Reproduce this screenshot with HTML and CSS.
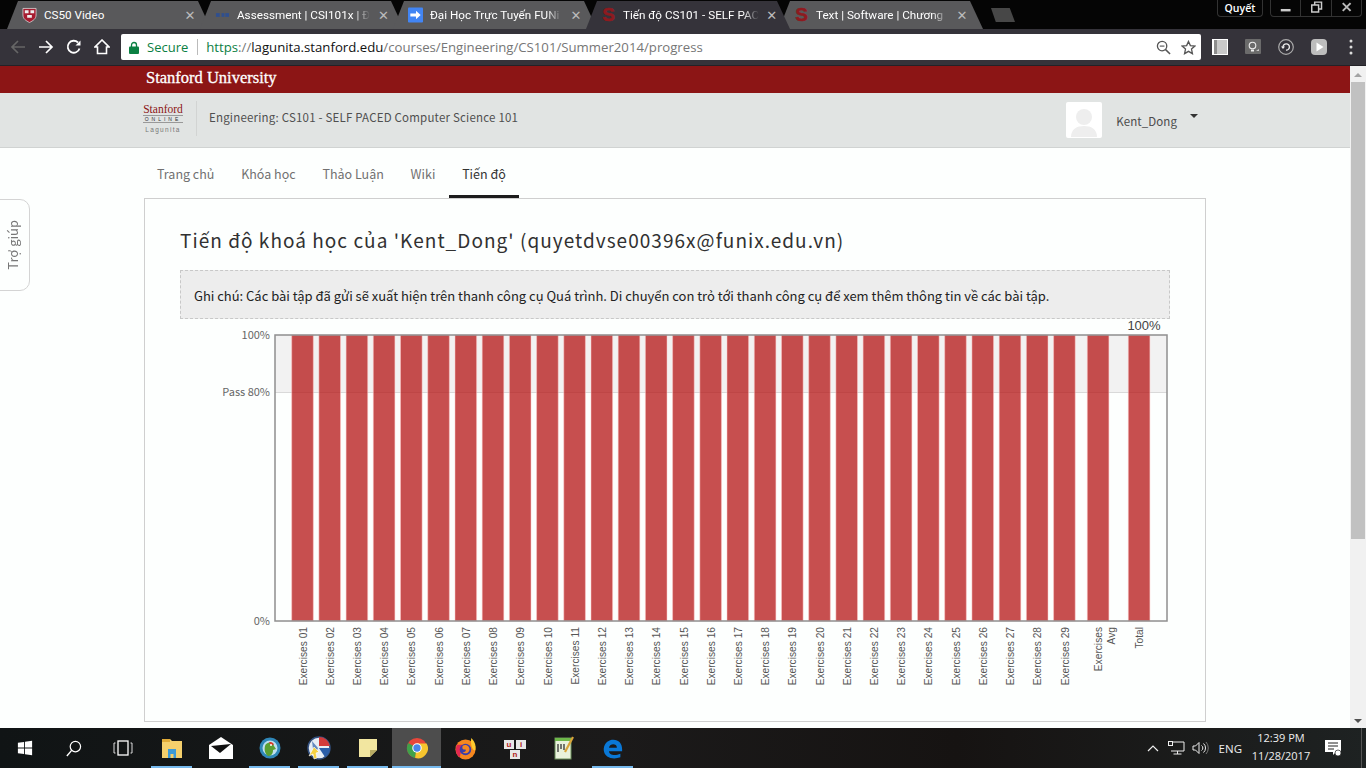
FILE: index.html
```html
<!DOCTYPE html>
<html lang="vi">
<head>
  <meta charset="UTF-8" />
  <title>Tiến độ CS101 - SELF PACED</title>
  <link rel="stylesheet" href="styles.css">
</head>
<body>
  <div class="tabstrip">
    <div class="tab">
      <svg class="favicon" viewBox="0 0 16 16"><path d="M1 1h14v7c0 4-3 6-7 8-4-2-7-4-7-8z" fill="#a51c30" stroke="#ddd" stroke-width=".8"/><path d="M3 3h4v3H3zM9 3h4v3H9zM5.500 8h5v3h-5z" fill="#eee"/></svg>
      <span class="tab-title">CS50 Video</span><span class="tab-close">✕</span>
    </div>
    <div class="tab">
      <svg class="favicon" viewBox="0 0 16 16"><rect x="1" y="6" width="14" height="4" fill="#2f4f8f"/><rect x="5" y="6" width="2" height="4" fill="#59595b"/><rect x="10" y="6" width="1" height="4" fill="#59595b"/></svg>
      <span class="tab-title tab-fade">Assessment | CSI101x | Đ</span><span class="tab-close">✕</span>
    </div>
    <div class="tab">
      <svg class="favicon" viewBox="0 0 16 16"><rect width="16" height="16" rx="1" fill="#4285f4"/><path d="M2.500 6.500h6V3.500L13.500 8l-5 4.500V9.500h-6z" fill="#fff"/></svg>
      <span class="tab-title tab-fade">Đại Học Trực Tuyến FUNi</span><span class="tab-close">✕</span>
    </div>
    <div class="tab tab-active">
      <span class="favicon favicon-s">S</span>
      <span class="tab-title tab-fade">Tiến độ CS101 - SELF PAC</span><span class="tab-close">✕</span>
    </div>
    <div class="tab">
      <span class="favicon favicon-s">S</span>
      <span class="tab-title tab-fade">Text | Software | Chương</span><span class="tab-close">✕</span>
    </div>
    <div class="newtab"></div>
    <div class="window-area">
      <span class="profile">Quyết</span>
      <div class="window-controls">
        <svg viewBox="0 0 30 16"><rect x="10" y="9" width="10" height="2.500" fill="#ccc"/></svg>
        <svg viewBox="0 0 30 16"><path d="M11 5h7v7h-7zM14 5V2h7v7h-3" fill="none" stroke="#ccc" stroke-width="1.500"/></svg>
        <svg viewBox="0 0 30 16"><path d="M11 3l8 8M19 3l-8 8" stroke="#bbb" stroke-width="2"/></svg>
      </div>
    </div>
  </div>

  <div class="toolbar">
    <svg class="tool" viewBox="0 0 16 16"><path d="M15 8H2M8 2L2 8l6 6" fill="none" stroke="#666" stroke-width="1.700"/></svg>
    <svg class="tool" viewBox="0 0 16 16"><path d="M1 8h13M8 2l6 6-6 6" fill="none" stroke="#fff" stroke-width="1.700"/></svg>
    <svg class="tool" viewBox="0 0 16 16"><path d="M13.500 9.500A6 6 0 1 1 12 3.500" fill="none" stroke="#fff" stroke-width="1.800"/><path d="M9.500 6.500h5v-5z" fill="#fff"/></svg>
    <svg class="tool" viewBox="0 0 16 16"><path d="M8 1L1 8h2.500v6.500h9V8H15z" fill="none" stroke="#fff" stroke-width="1.600"/></svg>
    <div class="omnibox">
      <svg class="lock" viewBox="0 0 10 13"><path d="M2.500 6V4a2.500 2.500 0 0 1 5 0v2" fill="none" stroke="#0b8043" stroke-width="1.300"/><rect y="5.500" width="10" height="7.500" rx="1" fill="#0b8043"/></svg>
      <span class="secure">Secure</span>
      <span class="omni-sep"></span>
      <span class="url"><span class="url-https">https</span>://<span class="url-host">lagunita.stanford.edu</span>/courses/Engineering/CS101/Summer2014/progress</span>
      <svg class="omni-icon" viewBox="0 0 16 16"><circle cx="6.500" cy="6.500" r="5" fill="none" stroke="#555" stroke-width="1.400"/><path d="M10 10l5 5" stroke="#555" stroke-width="1.600"/><path d="M4 6.500h5" stroke="#555" stroke-width="1.200"/></svg>
      <svg class="omni-icon" viewBox="0 0 16 16"><path d="M8 1.500l2 4.500 4.800.5-3.600 3.200 1 4.800L8 12.100l-4.200 2.400 1-4.800L1.200 6.500 6 6z" fill="none" stroke="#555" stroke-width="1.400"/></svg>
    </div>
    <div class="extensions">
      <svg viewBox="0 0 16 16"><rect width="16" height="16" fill="#fff"/><rect x="2" y="1" width="13" height="14" fill="#c9c9c9"/><rect x="2" y="1" width="3" height="14" fill="#8d8d8d"/></svg>
      <svg viewBox="0 0 16 16"><rect width="16" height="15" rx="1" fill="#6b6b6b"/><circle cx="7.500" cy="6.500" r="3.300" fill="none" stroke="#eee" stroke-width="1.100"/><path d="M6 10.500h3v2H6z" fill="#eee"/><path d="M11 12l3-2v2z" fill="#ccc"/></svg>
      <svg viewBox="0 0 16 16"><circle cx="8" cy="8" r="7.300" fill="none" stroke="#aaa" stroke-width="1.200"/><path d="M5 8a3.200 3.200 0 1 1 3 3.200" fill="none" stroke="#eee" stroke-width="1.300"/><path d="M3 7.500h4l-2 2.500z" fill="#eee"/></svg>
      <svg viewBox="0 0 16 16"><rect width="16" height="16" rx="4" fill="#bdbdbd"/><path d="M5.500 3.500l7 4.500-7 4.500z" fill="#fff"/></svg>
      <svg class="kebab" viewBox="0 0 4 16"><circle cx="2" cy="2" r="1.500" fill="#ddd"/><circle cx="2" cy="8" r="1.500" fill="#ddd"/><circle cx="2" cy="14" r="1.500" fill="#ddd"/></svg>
    </div>
  </div>

  <div class="viewport">
    <div class="page">
      <div class="brandbar"><span class="brandbar-name">Stanford University</span></div>

      <header class="course-header">
        <div class="logo">
          <span class="logo-stanford">Stanford</span>
          <span class="logo-online">ONLINE</span>
          <span class="logo-lagunita">Lagunita</span>
        </div>
        <span class="course-title">Engineering: CS101 - SELF PACED Computer Science 101</span>
        <div class="user">
          <span class="avatar">
            <svg viewBox="0 0 36 36"><circle cx="18" cy="15" r="8" fill="#eee"/><path d="M5 35c0-8 6-11 13-11s13 3 13 11z" fill="#eee"/></svg>
          </span>
          <span class="username">Kent_Dong</span>
          <span class="caret"></span>
        </div>
      </header>

      <nav class="course-nav">
        <a class="nav-item">Trang chủ</a>
        <a class="nav-item">Khóa học</a>
        <a class="nav-item">Thảo Luận</a>
        <a class="nav-item">Wiki</a>
        <a class="nav-item nav-active">Tiến độ</a>
      </nav>

      <section class="card">
        <h1 class="progress-title">Tiến độ khoá học của 'Kent_Dong' (quyetdvse00396x@funix.edu.vn)</h1>
        <p class="note">Ghi chú: Các bài tập đã gửi sẽ xuất hiện trên thanh công cụ Quá trình. Di chuyển con trỏ tới thanh công cụ để xem thêm thông tin về các bài tập.</p>
        <svg class="chart" viewBox="180 319 990 390" width="990" height="390">
          <rect x="275" y="335" width="892" height="57" fill="#f2f2f2"/>
          <path d="M275 392.500h892" stroke="#d9d9d9"/>
          <g class="bars">
            <rect x="291.700" y="335" width="21.600" height="286"/>
            <rect x="318.900" y="335" width="21.600" height="286"/>
            <rect x="346.100" y="335" width="21.600" height="286"/>
            <rect x="373.300" y="335" width="21.600" height="286"/>
            <rect x="400.500" y="335" width="21.600" height="286"/>
            <rect x="427.750" y="335" width="21.600" height="286"/>
            <rect x="455" y="335" width="21.600" height="286"/>
            <rect x="482.200" y="335" width="21.600" height="286"/>
            <rect x="509.400" y="335" width="21.600" height="286"/>
            <rect x="536.600" y="335" width="21.600" height="286"/>
            <rect x="563.800" y="335" width="21.600" height="286"/>
            <rect x="591" y="335" width="21.600" height="286"/>
            <rect x="618.200" y="335" width="21.600" height="286"/>
            <rect x="645.400" y="335" width="21.600" height="286"/>
            <rect x="672.600" y="335" width="21.600" height="286"/>
            <rect x="699.850" y="335" width="21.600" height="286"/>
            <rect x="727" y="335" width="21.600" height="286"/>
            <rect x="754.300" y="335" width="21.600" height="286"/>
            <rect x="781.500" y="335" width="21.600" height="286"/>
            <rect x="808.700" y="335" width="21.600" height="286"/>
            <rect x="835.900" y="335" width="21.600" height="286"/>
            <rect x="863.100" y="335" width="21.600" height="286"/>
            <rect x="890.300" y="335" width="21.600" height="286"/>
            <rect x="917.500" y="335" width="21.600" height="286"/>
            <rect x="944.700" y="335" width="21.600" height="286"/>
            <rect x="971.950" y="335" width="21.600" height="286"/>
            <rect x="999.200" y="335" width="21.600" height="286"/>
            <rect x="1026.400" y="335" width="21.600" height="286"/>
            <rect x="1053.600" y="335" width="21.600" height="286"/>
            <rect x="1087.300" y="335" width="21.600" height="286"/>
            <rect x="1128.300" y="335" width="21.600" height="286"/>
          </g>
          <rect class="frame" x="275" y="335" width="892" height="286"/>
          <text class="ylabel" x="270" y="339">100%</text>
          <text class="ylabel" x="270" y="396">Pass 80%</text>
          <text class="ylabel" x="270" y="625">0%</text>
          <text class="toplabel" x="1144" y="330">100%</text>
          <g class="xlabels">
            <text transform="translate(306.600 627) rotate(-90)">Exercises 01</text>
            <text transform="translate(333.800 627) rotate(-90)">Exercises 02</text>
            <text transform="translate(361 627) rotate(-90)">Exercises 03</text>
            <text transform="translate(388.200 627) rotate(-90)">Exercises 04</text>
            <text transform="translate(415.400 627) rotate(-90)">Exercises 05</text>
            <text transform="translate(442.650 627) rotate(-90)">Exercises 06</text>
            <text transform="translate(469.900 627) rotate(-90)">Exercises 07</text>
            <text transform="translate(497.100 627) rotate(-90)">Exercises 08</text>
            <text transform="translate(524.300 627) rotate(-90)">Exercises 09</text>
            <text transform="translate(551.500 627) rotate(-90)">Exercises 10</text>
            <text transform="translate(578.700 627) rotate(-90)">Exercises 11</text>
            <text transform="translate(605.900 627) rotate(-90)">Exercises 12</text>
            <text transform="translate(633.100 627) rotate(-90)">Exercises 13</text>
            <text transform="translate(660.300 627) rotate(-90)">Exercises 14</text>
            <text transform="translate(687.500 627) rotate(-90)">Exercises 15</text>
            <text transform="translate(714.750 627) rotate(-90)">Exercises 16</text>
            <text transform="translate(741.900 627) rotate(-90)">Exercises 17</text>
            <text transform="translate(769.200 627) rotate(-90)">Exercises 18</text>
            <text transform="translate(796.400 627) rotate(-90)">Exercises 19</text>
            <text transform="translate(823.600 627) rotate(-90)">Exercises 20</text>
            <text transform="translate(850.800 627) rotate(-90)">Exercises 21</text>
            <text transform="translate(878 627) rotate(-90)">Exercises 22</text>
            <text transform="translate(905.200 627) rotate(-90)">Exercises 23</text>
            <text transform="translate(932.400 627) rotate(-90)">Exercises 24</text>
            <text transform="translate(959.600 627) rotate(-90)">Exercises 25</text>
            <text transform="translate(986.850 627) rotate(-90)">Exercises 26</text>
            <text transform="translate(1014.100 627) rotate(-90)">Exercises 27</text>
            <text transform="translate(1041.300 627) rotate(-90)">Exercises 28</text>
            <text transform="translate(1068.500 627) rotate(-90)">Exercises 29</text>
            <text transform="translate(1101.700 627) rotate(-90)">Exercises</text>
            <text transform="translate(1114.500 627) rotate(-90)">Avg</text>
            <text transform="translate(1143.300 627) rotate(-90)">Total</text>
          </g>
        </svg>
      </section>

      <div class="help-tab"><span class="help-label">Trợ giúp</span></div>
    </div>

    <div class="scrollbar">
      <span class="scroll-up"></span>
      <span class="scroll-thumb"></span>
      <span class="scroll-down"></span>
    </div>
  </div>

  <div class="taskbar">
    <div class="task-button">
      <svg width="16" height="16" viewBox="0 0 18 18"><path d="M1 3.200l7-1v6.300H1zM9 2l8-1.200v7.700H9zM1 9.500h7v6.300l-7-1zM9 9.500h8v7.700L9 16z" fill="#fff"/></svg>
    </div>
    <div class="task-button">
      <svg width="17" height="17" viewBox="0 0 18 18"><circle cx="11" cy="7" r="5.500" fill="none" stroke="#fff" stroke-width="1.300"/><path d="M7 11l-5 6" stroke="#fff" stroke-width="1.500"/></svg>
    </div>
    <div class="task-button">
      <svg width="20" height="18" viewBox="0 0 20 18"><rect x="5" y="2" width="10" height="14" fill="none" stroke="#fff" stroke-width="1.300"/><path d="M2.500 4H1v10h1.500M17.500 4H19v10h-1.500" fill="none" stroke="#ddd"/></svg>
    </div>
    <div class="task-button task-open">
      <svg width="22" height="22" viewBox="0 0 22 22"><path d="M1 2h8l2 2h10v17H1z" fill="#f4cf6c"/><path d="M1 2h8v3H1z" fill="#e0ab38"/><path d="M7 12h8v9h-2.500v-4h-3v4H7z" fill="#3d9ad6"/></svg>
    </div>
    <div class="task-button">
      <svg width="24" height="22" viewBox="0 0 24 22"><path d="M0 8L12 0l12 8v14H0z" fill="#fff"/><path d="M2 9l20-2-11 9z" fill="#111"/></svg>
    </div>
    <div class="task-button task-open">
      <svg width="22" height="22" viewBox="0 0 22 22"><circle cx="11" cy="11" r="10.500" fill="#2f87b8"/><circle cx="11" cy="11" r="7.500" fill="#bfe0ee"/><path d="M6 9c1-4 8-5 9 0l2 3-3 1c0 4-2 6-5 6-3-2-4-6-3-10z" fill="#5aa032"/><path d="M10 5.500c2-1 4 0 5 2l-3 1z" fill="#d93a2b"/><circle cx="12" cy="8" r="1" fill="#fff"/></svg>
    </div>
    <div class="task-button task-open">
      <svg width="24" height="24" viewBox="0 0 24 24"><circle cx="12" cy="12" r="11" fill="#e8eef5" stroke="#33507f" stroke-width="1.500"/><path d="M12 1a11 11 0 0 1 11 9H12z" fill="#d33a3a"/><path d="M12 12h11a11 11 0 0 1-5 9z" fill="#2b5ea8"/><path d="M5 5l6 7-4 9z" fill="#2b5ea8" opacity=".7"/><path d="M2 20l5-9 5 5-3 1 1 5-3 1-1-5z" fill="#f5d142" stroke="#fff" stroke-width=".6"/></svg>
    </div>
    <div class="task-button task-open">
      <svg width="18" height="18" viewBox="0 0 18 18"><path d="M0 0h18v11l-7 7H0z" fill="#f2e6a0"/><path d="M11 18v-7h7z" fill="#b8ab63"/></svg>
    </div>
    <div class="task-button task-open task-current">
      <svg width="22" height="22" viewBox="0 0 24 24"><circle cx="12" cy="12" r="11" fill="#e8463a"/><path d="M12 12L2.500 6.500A11 11 0 0 0 10 23z" fill="#3fa14a"/><path d="M12 7h10.500A11 11 0 0 1 10 23z" fill="#f7c52e"/><circle cx="12" cy="12" r="5.200" fill="#fff"/><circle cx="12" cy="12" r="4" fill="#4a85e8"/></svg>
    </div>
    <div class="task-button">
      <svg width="23" height="23" viewBox="0 0 24 24"><circle cx="12" cy="13" r="10.500" fill="#f5871f"/><path d="M18 1c5 5 5 10 4 13-3 0-5-6-4-13z" fill="#ffcb2e"/><path d="M3 8c-2 5-1 11 3 13L9 8z" fill="#e22850"/><circle cx="12" cy="13" r="6" fill="#3b3fa8"/><path d="M9 9c4-2 8 1 7 5-1 3-5 4-7 2 3 0 4-2 3-3-2 0-4 0-3-4z" fill="#f5871f"/></svg>
    </div>
    <div class="task-button">
      <svg width="24" height="22" viewBox="0 0 24 22"><g fill="#e8e8e8"><rect x="1" y="3" width="10" height="9"/><rect x="13" y="3" width="10" height="9"/><rect x="7" y="13" width="10" height="9"/></g><g class="uni-keys"><text x="6" y="10">u</text><text x="18" y="10">i</text><text x="12" y="20">n</text></g></svg>
    </div>
    <div class="task-button">
      <svg width="22" height="26" viewBox="0 0 22 24"><rect x="2" y="2" width="16" height="21" fill="#e9f2dc" stroke="#6b8f5a"/><path d="M2 2h16v3H2z" fill="#6eb84a"/><path d="M5 8v8M8 8v5M11 8v6" stroke="#333" stroke-width="1.300"/><path d="M20 1L12 16" stroke="#d9a53a" stroke-width="2.200"/></svg>
    </div>
    <div class="task-button task-open">
      <svg width="21" height="21" viewBox="0 0 24 24"><path d="M2 12C3 5 8 2 13 2c6 0 10 4 10 11v2H8c0 4 6 6 13 3v4c-8 3-18 1-19-8 0-1 0-1 0-2zm6-1h9c0-5-8-5-9 0z" fill="#0a78d6"/></svg>
    </div>
    <div class="tray">
      <svg class="tray-chevron" viewBox="0 0 12 8"><path d="M1 7l5-5 5 5" fill="none" stroke="#eee" stroke-width="1.200"/></svg>
      <svg class="tray-net" viewBox="0 0 17 14"><path d="M3 1h13v9H3M9.500 10v3M5.500 13h8" fill="none" stroke="#eee"/><rect x=".5" y=".5" width="4" height="4" fill="#222" stroke="#eee"/></svg>
      <svg class="tray-vol" viewBox="0 0 17 14"><path d="M1 5h2.500L7 1.500v11L3.500 9H1z" fill="none" stroke="#eee"/><path d="M9.500 4.500a3 3 0 0 1 0 5M11.500 2.500a6 6 0 0 1 0 9" fill="none" stroke="#eee"/><path d="M14 1a9 9 0 0 1 0 12" fill="none" stroke="#777"/></svg>
      <span class="tray-lang">ENG</span>
      <div class="clock"><span>12:39 PM</span><span>11/28/2017</span></div>
      <svg class="tray-notify" viewBox="0 0 16 16"><path d="M0 0h16v12h-5l-3 3v-3H0z" fill="#fff"/><path d="M3 3h10M3 6h10M3 9h6" stroke="#222"/><circle cx="13" cy="13" r="3" fill="#fff" stroke="#222" stroke-width=".7"/></svg>
      <span class="show-desktop"></span>
    </div>
  </div>
</body>
</html>
```

FILE: styles.css
```css
html, body {
  margin: 0;
  height: 100%;
}
body {
  width: 1366px;
  height: 768px;
  overflow: hidden;
  display: flex;
  flex-direction: column;
  background: #fdfffe;
  font-family: "Open Sans", sans-serif;
}

/* browser chrome */
.tabstrip {
  height: 29px;
  flex: none;
  display: flex;
  padding-left: 7px;
  background: #050505;
  box-sizing: border-box;
}
.tab {
  width: 204px;
  height: 28px;
  margin: 1px -11px 0 0;
  padding: 0 14px 0 15px;
  box-sizing: border-box;
  display: flex;
  align-items: center;
  gap: 7px;
  background: #59595b;
  color: #fff;
  font-family: Roboto, sans-serif;
  font-size: 11.700px;
  clip-path: polygon(0 100%, 11px 0, calc(100% - 13px) 0, 100% 100%);
}
.tab-active {
  background: #35333a;
  position: relative;
  z-index: 1;
}
.favicon {
  width: 15px;
  height: 16px;
  flex: none;
}
.favicon-s {
  font: bold 19px/16px "Liberation Sans", sans-serif;
  -webkit-text-stroke: .5px #8e1a1f;
  color: #8e1a1f;
  text-align: center;
}
.tab-title {
  flex: 1;
  white-space: nowrap;
}
.tab-fade {
  -webkit-mask-image: linear-gradient(to right, #000 88%, transparent);
  mask-image: linear-gradient(to right, #000 88%, transparent);
}
.tab-close {
  width: 14px;
  color: #bbb;
  font: bold 13px "DejaVu Sans", sans-serif;
  text-align: center;
}
.newtab {
  width: 24px;
  height: 14px;
  margin: 8px 0 0 19px;
  background: #474747;
  clip-path: polygon(0 0, 78% 0, 100% 100%, 20% 100%);
}
.window-area {
  margin-left: auto;
  display: flex;
  gap: 7px;
  padding-right: 4px;
}
.profile {
  width: 46px;
  height: 17px;
  box-sizing: border-box;
  border: 1px solid #333;
  border-top: 0;
  border-radius: 0 0 4px 4px;
  color: #fff;
  font-size: 10.500px;
  font-weight: 600;
  line-height: 16px;
  text-align: center;
}
.window-controls {
  width: 92px;
  height: 17px;
  box-sizing: border-box;
  display: flex;
  border: 1px solid #333;
  border-top: 0;
  border-radius: 0 0 4px 4px;
}
.window-controls svg {
  flex: 1;
  height: 16px;
  width: 30px;
}
.window-controls svg + svg {
  border-left: 1px solid #333;
}

.toolbar {
  height: 37px;
  flex: none;
  display: flex;
  align-items: center;
  padding-left: 10px;
  background: #35333a;
  box-sizing: border-box;
  border-bottom: 1px solid #232227;
}
.tool {
  width: 16px;
  height: 16px;
  margin-right: 12px;
}
.omnibox {
  width: 1080px;
  height: 26px;
  margin: 0 0 0 -1px;
  display: flex;
  align-items: center;
  background: #fff;
  border-radius: 2px;
  font-size: 13px;
}
.lock {
  width: 10px;
  height: 13px;
  margin-left: 8px;
}
.secure {
  margin-left: 8px;
  color: #0b8043;
}
.omni-sep {
  width: 1px;
  height: 16px;
  margin: 0 8px 0 9px;
  background: #bbb;
}
.url {
  flex: 1;
  color: #767676;
  font-size: 13.200px;
  white-space: nowrap;
}
.url-https {
  color: #0b8043;
}
.url-host {
  color: #111;
}
.omni-icon {
  width: 15px;
  height: 15px;
  margin-right: 10px;
}
.omni-icon:last-child {
  margin-right: 5px;
}
.extensions {
  display: flex;
  align-items: center;
  gap: 17px;
  margin-left: 11px;
}
.extensions svg {
  width: 16px;
  height: 16px;
}
.extensions .kebab {
  width: 4px;
  margin-left: 5px;
}

.viewport {
  flex: 1;
  min-height: 0;
  display: flex;
}
.page {
  flex: 1;
  min-width: 0;
  position: relative;
  overflow: hidden;
}
.scrollbar {
  width: 16px;
  flex: none;
  display: flex;
  flex-direction: column;
  align-items: center;
  background: #f1f1f1;
}
.scroll-up, .scroll-down {
  width: 0;
  height: 0;
  border-left: 4px solid transparent;
  border-right: 4px solid transparent;
}
.scroll-up {
  margin: 7px 0 5px;
  border-bottom: 4px solid #a3a3a3;
}
.scroll-thumb {
  width: 14px;
  height: 457px;
  background: #c1c1c1;
}
.scroll-down {
  margin-top: auto;
  margin-bottom: 5px;
  border-top: 4px solid #505050;
}

/* page header */
.brandbar {
  height: 27px;
  padding-left: 146px;
  background: #8c1515;
}
.brandbar-name {
  color: #fff;
  font: 16.500px/24px "Liberation Serif", serif;
  -webkit-text-stroke: .3px #fff;
}
.course-header {
  height: 55px;
  box-sizing: border-box;
  display: flex;
  align-items: center;
  padding-left: 143px;
  background: #e1e4e3;
  border-bottom: 1px solid #d0d3d2;
}
.logo {
  width: 40px;
  height: 32px;
  padding: 3px 13px 0 0;
  box-sizing: content-box;
  display: flex;
  flex-direction: column;
  align-items: center;
  border-right: 1px solid #d2d4d3;
  margin-top: -3px;
}
.logo-stanford {
  font: 11.500px/11px "Liberation Serif", serif;
  color: #8c1515;
}
.logo-online {
  width: 40px;
  border-top: 1px solid #999;
  border-bottom: 1px solid #999;
  font: 5px/6px "Liberation Sans", sans-serif;
  letter-spacing: 3px;
  color: #333;
  text-align: center;
}
.logo-lagunita {
  margin-top: 3px;
  font: 6.500px/8px "Liberation Sans", sans-serif;
  letter-spacing: 1.300px;
  color: #777;
}
.course-title {
  margin: 0 0 7px 12px;
  color: #4f4f4f;
  font-family: "Noto Sans CJK SC", "Open Sans", sans-serif;
  font-size: 11.500px;
  letter-spacing: .2px;
}
.user {
  margin-left: auto;
  margin-right: 152px;
  display: flex;
  align-items: center;
  height: 36px;
}
.avatar {
  width: 36px;
  height: 36px;
  background: #fff;
  border-radius: 2px;
}
.avatar svg {
  display: block;
}
.username {
  margin: 2px 13px 0 14px;
  color: #4b4b4b;
  font-family: "Noto Sans CJK SC", "Open Sans", sans-serif;
  font-size: 11.500px;
  letter-spacing: .1px;
}
.caret {
  align-self: flex-start;
  margin-top: 12px;
  border-left: 4px solid transparent;
  border-right: 4px solid transparent;
  border-top: 4px solid #333;
}

.course-nav {
  height: 50px;
  display: flex;
  padding-left: 144px;
  box-sizing: border-box;
  font-family: "Noto Sans CJK SC", "Open Sans", sans-serif;
  font-size: 12.500px;
}
.nav-item {
  padding: 0 13.400px;
  line-height: 51px;
  color: #717171;
}
.nav-item:first-child {
  padding-left: 13px;
}
.nav-active {
  color: #333;
  border-bottom: 3px solid #1c1c1c;
  height: 47px;
}

.card {
  width: 1062px;
  margin-left: 144px;
  box-sizing: border-box;
  padding: 0 35px 12px;
  border: 1px solid #cfcfcf;
  font-family: "Noto Sans CJK SC", "Open Sans", sans-serif;
}
.progress-title {
  margin: 25px 0 14px;
  color: #313131;
  font-size: 19px;
  font-weight: 400;
  line-height: 32px;
  letter-spacing: 1.040px;
  white-space: nowrap;
}
.note {
  height: 49px;
  margin: 0;
  padding: 0 13px;
  box-sizing: border-box;
  border: 1px dashed #c8c8c8;
  background: #ededed;
  color: #222;
  font-size: 13px;
  letter-spacing: -.02px;
  line-height: 49px;
  white-space: nowrap;
}
.chart {
  display: block;
}
.bars rect {
  fill: rgba(180, 20, 20, .75);
  stroke: rgba(255, 200, 200, .5);
}
.frame {
  fill: none;
  stroke: #8f8f8f;
  stroke-width: 1.500;
}
.ylabel {
  fill: #666;
  font-size: 11px;
  text-anchor: end;
}
.toplabel {
  fill: #444;
  font: 13px "Liberation Sans", sans-serif;
  text-anchor: middle;
}
.xlabels text {
  fill: #555;
  font: 10.200px "Liberation Sans", sans-serif;
  text-anchor: end;
}

.help-tab {
  position: absolute;
  left: -1px;
  top: 133px;
  width: 31px;
  height: 92px;
  padding-right: 4px;
  box-sizing: border-box;
  display: flex;
  align-items: center;
  justify-content: center;
  border: 1px solid #d4d4d4;
  border-radius: 0 10px 10px 0;
  background: #fdfffe;
}
.help-label {
  writing-mode: vertical-rl;
  transform: rotate(180deg);
  color: #777;
  font-family: "Noto Sans CJK SC", "Open Sans", sans-serif;
  font-size: 13px;
}

/* windows taskbar */
.taskbar {
  height: 40px;
  flex: none;
  display: flex;
  background: linear-gradient(to right, #101415, #1b1a1a 45%, #161312 70%, #1e2222);
}
.task-button {
  width: 49px;
  box-sizing: border-box;
  display: flex;
  align-items: center;
  justify-content: center;
  position: relative;
}
.task-open::after {
  content: "";
  position: absolute;
  left: 4px;
  right: 4px;
  bottom: 0;
  height: 2px;
  background: #76b9ed;
}
.task-current {
  background: #4d4d4d;
}
.task-current::after {
  left: 0;
  right: 0;
}
.uni-keys text {
  fill: #b02020;
  font: bold 8px "Liberation Sans", sans-serif;
  text-anchor: middle;
}
.tray {
  margin-left: auto;
  display: flex;
  align-items: center;
  color: #eee;
}
.tray-chevron {
  width: 12px;
  height: 8px;
  margin-right: 9px;
}
.tray-net {
  width: 17px;
  height: 14px;
  margin-right: 7px;
}
.tray-vol {
  width: 17px;
  height: 14px;
  margin-right: 10px;
}
.tray-lang {
  font-size: 11.500px;
}
.clock {
  width: 76px;
  margin: -2px 0 0 1px;
  display: flex;
  flex-direction: column;
  align-items: center;
  font-size: 11px;
  line-height: 18px;
}
.tray-notify {
  width: 16px;
  height: 16px;
  margin: 0 20px 0 6px;
}
.show-desktop {
  width: 1px;
  height: 40px;
  margin-right: 4px;
  background: #555;
}
```
